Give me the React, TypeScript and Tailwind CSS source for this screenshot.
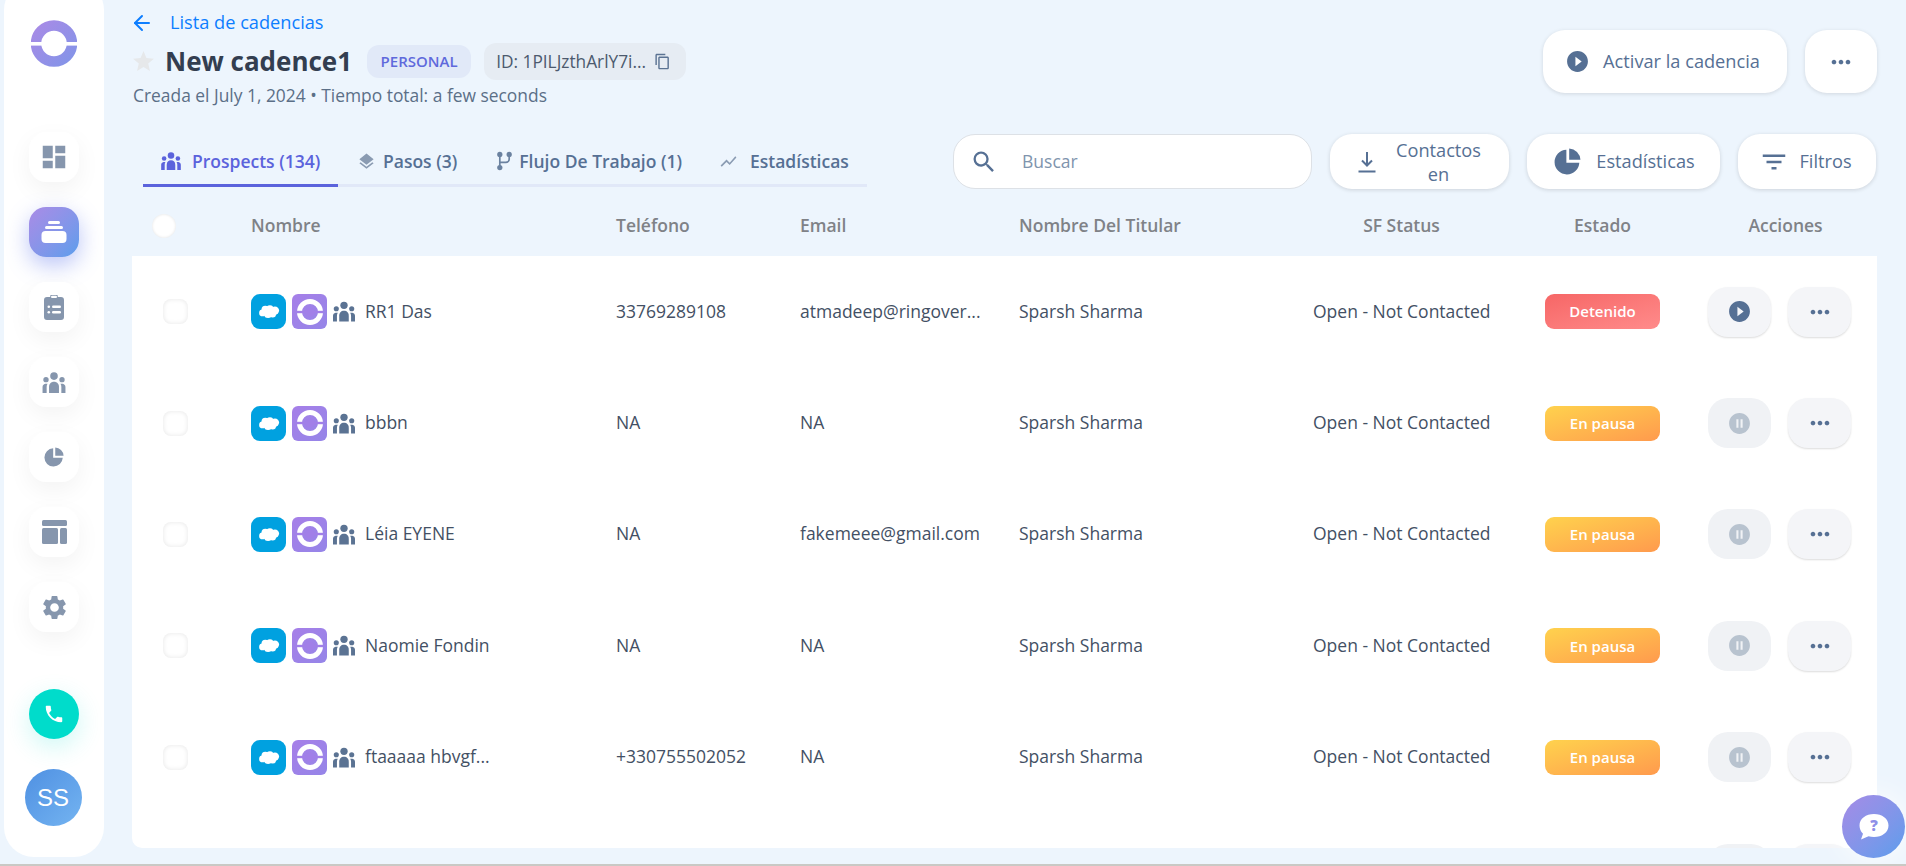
import type { ReactNode } from "react";
import {
  MdContentCopy,
  MdDashboard,
  MdFilterList,
  MdLayers,
  MdMoreHoriz,
  MdPauseCircleFilled,
  MdPhone,
  MdPlayCircleFilled,
  MdSearch,
  MdSettings,
  MdShowChart,
  MdStar,
} from "react-icons/md";
import { ArrowLeft } from "lucide-react";

const rows = [
  { name: "RR1 Das", phone: "33769289108", email: "atmadeep@ringover...", status: "stopped" },
  { name: "bbbn", phone: "NA", email: "NA", status: "paused" },
  { name: "Léia EYENE", phone: "NA", email: "fakemeee@gmail.com", status: "paused" },
  { name: "Naomie Fondin", phone: "NA", email: "NA", status: "paused" },
  { name: "ftaaaaa hbvgf...", phone: "+330755502052", email: "NA", status: "paused" },
];

const columns = "grid grid-cols-[88px_365px_184px_219px_294px_232px_163px_1fr] pl-[31px]";

function RingLogo() {
  return (
    <svg viewBox="0 0 46 47" className="h-[47px] w-[46px]">
      <defs>
        <linearGradient id="ring" x1="0" y1="0" x2="1" y2="1">
          <stop offset="0" stopColor="#a78be6" />
          <stop offset="1" stopColor="#8494e8" />
        </linearGradient>
      </defs>
      <circle cx="23" cy="23.5" r="18" fill="none" stroke="url(#ring)" strokeWidth="10.5" />
      <rect x="0" y="22" width="46" height="3.6" fill="#fff" />
    </svg>
  );
}

function SalesforceBadge() {
  return (
    <span className="flex h-[35px] w-[35px] items-center justify-center rounded-[9px] bg-[#00a1e0]">
      <svg viewBox="0 0 24 16" className="h-[15px] w-[22px]" fill="#fff">
        <circle cx="8" cy="6" r="4.2" />
        <circle cx="13" cy="5" r="3.8" />
        <circle cx="18.5" cy="7" r="4.5" />
        <circle cx="5" cy="9.5" r="3.8" />
        <circle cx="11" cy="11" r="4.2" />
        <circle cx="16" cy="11" r="3.6" />
      </svg>
    </span>
  );
}

function RingBadge() {
  return (
    <span className="flex h-[35px] w-[35px] items-center justify-center rounded-[6px] bg-linear-to-br from-[#a67fe8] to-[#9585e8]">
      <svg viewBox="0 0 26 26" className="h-[26px] w-[26px]">
        <circle cx="13" cy="13" r="10.5" fill="none" stroke="#fff" strokeWidth="5" />
        <rect x="0" y="11.8" width="26" height="2.4" fill="#a17fe8" />
        <circle cx="13" cy="13" r="4.5" fill="#a17fe8" />
      </svg>
    </span>
  );
}

function PeopleIcon({ className }: { className: string }) {
  return (
    <svg viewBox="0 0 24 22" className={className} fill="currentColor">
      <circle cx="12" cy="4.3" r="4" />
      <circle cx="3.6" cy="8" r="2.8" />
      <circle cx="20.4" cy="8" r="2.8" />
      <path d="M12 10.2c3.2 0 5.2 2.3 5.2 5.3V22H6.800v-6.500c0-3 2-5.300 5.200-5.300Z" />
      <path d="M2.800 12.300h2.400c-.6 1-.9 2.100-.9 3.300V22H0v-6.300c0-1.700 1.100-3 2.800-3.400Z" />
      <path d="M21.200 12.300h-2.400c.6 1 .9 2.100.9 3.300V22H24v-6.300c0-1.700-1.100-3-2.800-3.400Z" />
    </svg>
  );
}

function PieIcon({ className }: { className: string }) {
  return (
    <svg viewBox="0 0 24 24" className={className} fill="currentColor">
      <path d="M11 1.500a11 11 0 1 0 11.500 11.500H11Z" />
      <path d="M13.500 0.500v10h10A10.500 10.500 0 0 0 13.500 0.500Z" />
    </svg>
  );
}

function StackIcon() {
  return (
    <svg viewBox="0 0 26 24" className="h-[24px] w-[26px]" fill="#fff">
      <rect x="7" y="1" width="12" height="3" rx="1.5" />
      <rect x="4" y="6" width="18" height="3" rx="1.5" />
      <rect x="0.5" y="11" width="25" height="12" rx="4" />
    </svg>
  );
}

function ClipboardIcon() {
  return (
    <svg viewBox="0 0 20 25" className="h-[25px] w-[20px]">
      <path d="M3 2h3.200a3.800 3.800 0 0 1 7.600 0H17a3 3 0 0 1 3 3v17a3 3 0 0 1-3 3H3a3 3 0 0 1-3-3V5a3 3 0 0 1 3-3Z" fill="#8696ad" />
      <rect x="7" y="0.8" width="6" height="2.2" rx="1.1" fill="#fff" />
      <rect x="3.5" y="10.5" width="2.6" height="2.6" rx="1.3" fill="#fff" />
      <rect x="8" y="10.5" width="9" height="2.6" rx="1.3" fill="#fff" />
      <rect x="3.5" y="16" width="2.6" height="2.6" rx="1.3" fill="#fff" />
      <rect x="8" y="16" width="9" height="2.6" rx="1.3" fill="#fff" />
    </svg>
  );
}

function LayoutIcon() {
  return (
    <svg viewBox="0 0 25 24" className="h-[24px] w-[25px]" fill="#8696ad">
      <rect x="0" y="0" width="25" height="6" rx="1.5" />
      <rect x="0" y="8" width="16" height="16" rx="1.5" />
      <rect x="18" y="8" width="7" height="16" rx="1.5" />
    </svg>
  );
}

function FlowIcon() {
  return (
    <svg viewBox="0 0 16 20" className="h-[20px] w-[15px]" fill="#6b82a0">
      <circle cx="3" cy="3" r="2.8" />
      <circle cx="13" cy="3" r="2.8" />
      <circle cx="3" cy="17" r="2.8" />
      <path d="M3 3v14M3 11.500h6.500A3.500 3.500 0 0 0 13 8V3" fill="none" stroke="#6b82a0" strokeWidth="1.8" />
    </svg>
  );
}

function DownloadIcon() {
  return (
    <svg viewBox="0 0 18 22" className="h-[22px] w-[18px]" fill="none" stroke="#567094" strokeWidth="2">
      <path d="M9 1v13M4 9.500 9 14.500l5-5M0.500 20.500h17" />
    </svg>
  );
}

function NavButton({ children, active }: { children: ReactNode; active?: boolean }) {
  return (
    <button
      className={
        active
          ? "flex h-[50px] w-[50px] items-center justify-center rounded-[17px] bg-linear-to-br from-[#a98be6] to-[#5a9dec] shadow-[0_8px_22px_rgba(85,110,235,0.4)]"
          : "flex h-[50px] w-[50px] items-center justify-center rounded-[17px] bg-white shadow-[0_8px_24px_rgba(0,0,0,0.05)]"
      }
    >
      {children}
    </button>
  );
}

function Sidebar() {
  return (
    <aside className="-mt-[20px] ml-[4px] flex h-[877px] w-[100px] shrink-0 flex-col items-center rounded-[30px] bg-white pt-[40px]">
      <RingLogo />
      <div className="mt-[65px] flex flex-col gap-[25px]">
        <NavButton>
          <MdDashboard size={30} className="text-[#8696ad]" />
        </NavButton>
        <NavButton active>
          <StackIcon />
        </NavButton>
        <NavButton>
          <ClipboardIcon />
        </NavButton>
        <NavButton>
          <PeopleIcon className="h-[21px] w-[24px] text-[#8696ad]" />
        </NavButton>
        <NavButton>
          <PieIcon className="h-[20px] w-[20px] text-[#8696ad]" />
        </NavButton>
        <NavButton>
          <LayoutIcon />
        </NavButton>
        <NavButton>
          <MdSettings size={29} className="text-[#8696ad]" />
        </NavButton>
      </div>
      <button className="mt-[57px] flex h-[50px] w-[50px] items-center justify-center rounded-full bg-[#00dccb] shadow-[0_8px_26px_rgba(0,220,203,0.2)]">
        <MdPhone size={22} className="text-white" />
      </button>
      <div className="-ml-[2px] mt-[30px] flex h-[57px] w-[57px] items-center justify-center rounded-full bg-linear-to-br from-[#4f90e2] to-[#74b4f1] font-['Liberation_Sans',sans-serif] text-[24px] text-white">
        SS
      </div>
    </aside>
  );
}

function PageHeader() {
  return (
    <div className="flex h-[134px] justify-between">
      <div className="pt-[11px] pl-[1px]">
        <a className="flex h-[24px] items-center text-[18.2px] text-[#0d7eff]">
          <ArrowLeft size={24} strokeWidth={2} className="-ml-[3px]" />
          <span className="ml-[16px]">Lista de cadencias</span>
        </a>
        <div className="mt-[8px] flex h-[37px] items-center">
          <MdStar size={25} className="-ml-[2px] text-[#e6e8ea]" />
          <h1 className="ml-[9px] text-[26px] font-bold text-[#333e50]">New cadence1</h1>
          <span className="ml-[15px] flex h-[33px] w-[104px] items-center justify-center rounded-[12px] bg-[#e1e9f8] text-[15px] font-semibold text-[#5f69dc]">
            PERSONAL
          </span>
          <span className="ml-[13px] flex h-[37px] w-[202px] items-center justify-center gap-[8px] rounded-[12px] bg-[#e6ecf3] pr-[3px] text-[17.3px] text-[#4c5a6e]">
            ID: 1PILJzthArlY7i...
            <MdContentCopy size={17} className="text-[#5b7393]" />
          </span>
        </div>
        <p className="mt-[3px] text-[17.4px] leading-[24px] text-[#5b6f87]">Creada el July 1, 2024 • Tiempo total: a few seconds</p>
      </div>
      <div className="flex gap-[18px] pt-[30px]">
        <button className="flex h-[63px] w-[244px] items-center justify-center gap-[13px] rounded-[22px] bg-white pr-[5px] text-[18.2px] font-medium text-[#567094] shadow-[0_1px_4px_rgba(0,0,0,0.12)]">
          <MdPlayCircleFilled size={25} className="text-[#567094]" />
          Activar la cadencia
        </button>
        <button className="flex h-[63px] w-[72px] items-center justify-center rounded-[22px] bg-white text-[#567094] shadow-[0_1px_4px_rgba(0,0,0,0.12)]">
          <MdMoreHoriz size={28} />
        </button>
      </div>
    </div>
  );
}

function Toolbar() {
  return (
    <div className="flex h-[55px]">
      <div className="ml-[11px] flex h-[53px] w-[724px] items-start border-b-[3px] border-[#e1e8f8] pt-[14px] text-[17.5px] font-semibold text-[#567094]">
        <div className="-mb-[3px] flex h-[39px] w-[195px] items-start gap-[11px] border-b-[3px] border-[#5b63dc] pl-[18px] text-[#5b63dc]">
          <PeopleIcon className="mt-[4px] h-[18px] w-[20px]" />
          Prospects (134)
        </div>
        <div className="ml-[19px] flex items-center gap-[7px]">
          <MdLayers size={19} className="text-[#8a9bb2]" />
          Pasos (3)
        </div>
        <div className="ml-[40px] flex items-center gap-[7px]">
          <FlowIcon />
          Flujo De Trabajo (1)
        </div>
        <div className="ml-[37px] flex items-center gap-[12px]">
          <MdShowChart size={19} className="text-[#8a9bb2]" />
          Estadísticas
        </div>
      </div>
      <div className="ml-[86px] flex h-[55px] w-[359px] items-center rounded-[22px] border border-[#dde1e6] bg-white pl-[16px] text-[17.5px] text-[#8094ad]">
        <MdSearch size={28} className="text-[#567094]" />
        <span className="ml-[24px]">Buscar</span>
      </div>
      <button className="ml-[18px] flex h-[55px] w-[179px] items-center justify-center gap-[20px] rounded-[22px] bg-white text-[18.2px] font-medium leading-[24px] text-[#567094] shadow-[0_1px_4px_rgba(0,0,0,0.14)]">
        <DownloadIcon />
        <span className="w-[86px] text-center">Contactos en</span>
      </button>
      <button className="ml-[18px] flex h-[55px] w-[193px] items-center justify-center gap-[15px] rounded-[22px] bg-white pl-[2px] text-[18.2px] font-medium text-[#567094] shadow-[0_1px_4px_rgba(0,0,0,0.14)]">
        <PieIcon className="h-[27px] w-[27px]" />
        Estadísticas
      </button>
      <button className="ml-[18px] flex h-[55px] w-[138px] items-center justify-center gap-[10px] rounded-[22px] bg-white pr-[3px] text-[18.2px] font-medium text-[#567094] shadow-[0_1px_4px_rgba(0,0,0,0.14)]">
        <MdFilterList size={30} />
        Filtros
      </button>
    </div>
  );
}

function TableHead() {
  return (
    <div className={`${columns} h-[67px] items-center pt-[6px] text-[17.5px] font-semibold text-[#7f8287]`}>
      <span className="-ml-[11px] h-[24px] w-[24px] rounded-full bg-white shadow-[inset_0_0_3px_rgba(0,0,0,0.12)]" />
      <span>Nombre</span>
      <span>Teléfono</span>
      <span>Email</span>
      <span>Nombre Del Titular</span>
      <span className="w-[177px] text-center">SF Status</span>
      <span className="w-[115px] text-center">Estado</span>
      <span className="w-[155px] text-center">Acciones</span>
    </div>
  );
}

function Actions({ stopped }: { stopped: boolean }) {
  return (
    <div className="flex gap-[17px]">
      {stopped ? (
        <button className="flex h-[50px] w-[63px] items-center justify-center rounded-[20px] bg-[#f4f5f8] shadow-[0_1px_2px_rgba(0,0,0,0.14)]">
          <MdPlayCircleFilled size={25} className="text-[#567094]" />
        </button>
      ) : (
        <button className="flex h-[50px] w-[63px] items-center justify-center rounded-[20px] bg-[#f0f2f5]">
          <MdPauseCircleFilled size={25} className="text-[#b8c3cf]" />
        </button>
      )}
      <button className="flex h-[50px] w-[63px] items-center justify-center rounded-[20px] bg-[#f4f5f8] text-[#567094] shadow-[0_1px_2px_rgba(0,0,0,0.14)]">
        <MdMoreHoriz size={28} />
      </button>
    </div>
  );
}

function Row({ row }: { row: (typeof rows)[number] }) {
  const stopped = row.status === "stopped";
  return (
    <div className={`${columns} h-[111.4px] items-center text-[17.5px] text-[#435064]`}>
      <span className="h-[25px] w-[25px] rounded-[8px] bg-white shadow-[inset_0_0_5px_rgba(0,0,0,0.1)]" />
      <div className="flex items-center">
        <SalesforceBadge />
        <span className="ml-[6px]">
          <RingBadge />
        </span>
        <PeopleIcon className="ml-[6px] h-[21px] w-[22px] text-[#5b7393]" />
        <span className="mb-[2px] ml-[10px]">{row.name}</span>
      </div>
      <span className="mb-[2px]">{row.phone}</span>
      <span className="mb-[2px]">{row.email}</span>
      <span className="mb-[2px]">Sparsh Sharma</span>
      <span className="mb-[2px] w-[177px] text-center whitespace-nowrap">Open - Not Contacted</span>
      <span
        className={
          stopped
            ? "flex h-[35px] w-[115px] items-center justify-center rounded-[9px] bg-linear-to-br from-[#f66666] to-[#ff8b8b] text-[15px] font-semibold text-white"
            : "flex h-[35px] w-[115px] items-center justify-center rounded-[9px] bg-linear-to-br from-[#ffd24d] to-[#ff9a4d] text-[15px] font-semibold text-white"
        }
      >
        {stopped ? "Detenido" : "En pausa"}
      </span>
      <Actions stopped={stopped} />
    </div>
  );
}

export default function App() {
  return (
    <div className="relative flex h-[866px] w-[1906px] overflow-hidden bg-[#edf5fd] font-['Open_Sans',sans-serif]">
      <Sidebar />
      <main className="ml-[28px] w-[1745px]">
        <PageHeader />
        <Toolbar />
        <TableHead />
        <div className="h-[592px] overflow-hidden rounded-b-[10px] bg-white">
          {rows.map((row) => (
            <Row key={row.name} row={row} />
          ))}
          {/* next row, only its buttons peek in above the fold */}
          <div className="flex h-[111.4px] items-center justify-end pr-[26px]">
            <Actions stopped={false} />
          </div>
        </div>
      </main>
      <button className="absolute top-[795px] left-[1842px] flex h-[63px] w-[63px] items-center justify-center rounded-full bg-linear-to-br from-[#a58be6] to-[#5a9dec] shadow-[0_0_30px_rgba(255,255,255,0.9)]">
        <svg viewBox="0 0 30 26" className="h-[26px] w-[30px]">
          <path d="M15 0c8 0 14.500 4.700 14.500 11.500S23 23 15 23c-2 0-3.800-.3-5.500-.8L2 25.500l2-5.800C1.800 17.500.5 14.700.5 11.500.5 4.700 7 0 15 0Z" fill="#fff" />
          <text x="15" y="17" textAnchor="middle" fontSize="15" fontWeight="800" fill="#8f8fe8" fontFamily="Open Sans, sans-serif">?</text>
        </svg>
      </button>
      <div className="absolute bottom-0 left-0 h-[2px] w-full bg-[#c9c9c5]" />
    </div>
  );
}
